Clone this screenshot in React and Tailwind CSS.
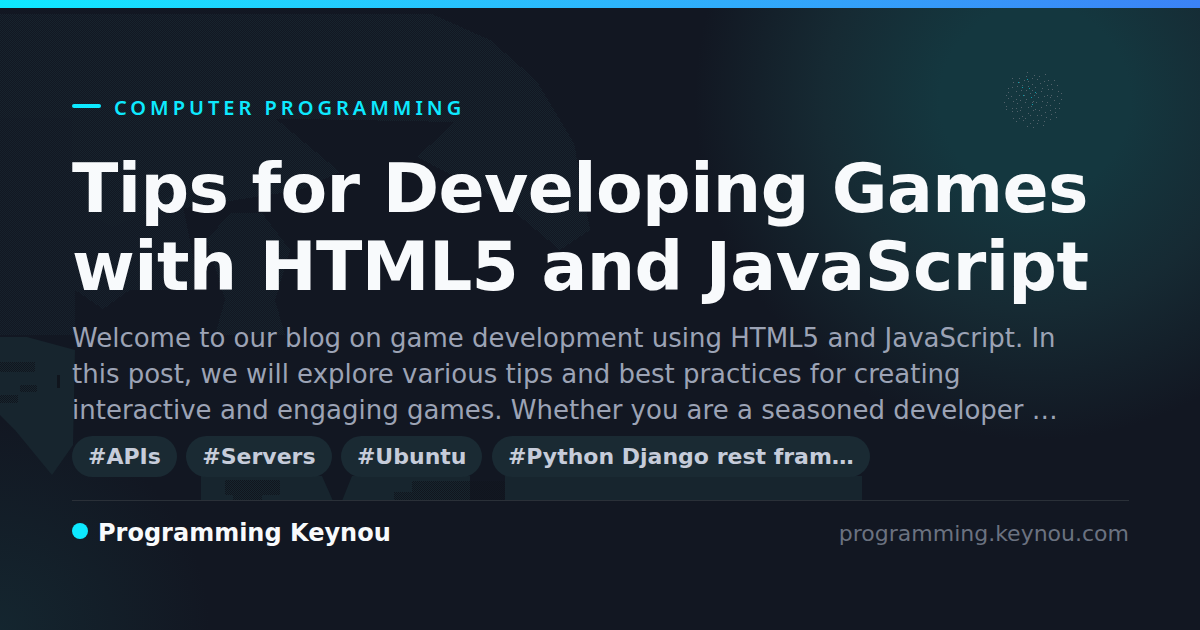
import React from "react";

const tags = ["#APIs", "#Servers", "#Ubuntu", "#Python Django rest fram…"];

const tealDots = [
  [1018, 82], [1022, 87], [1027, 79], [1029, 88],
  [1035, 92], [1031, 97], [1023, 95], [1032, 104],
];

// dotted cluster in the glow, top right
const dots = Array.from({ length: 110 }, (_, i) => {
  const r = 2.9 * Math.sqrt(i);
  const a = i * 2.399963;
  return {
    x: Math.round(1033 + r * Math.cos(a) + Math.sin(i * 7.3)),
    y: Math.round(99.5 + r * Math.sin(a) * 0.92 + Math.cos(i * 5.1)),
  };
});

function Backdrop() {
  return (
    <svg className="absolute inset-0" width="1200" height="630" viewBox="0 0 1200 630">
      <defs>
        <pattern id="dither" width="2" height="2" patternUnits="userSpaceOnUse">
          <rect width="1" height="1" fill="#1a2b35" />
          <rect x="1" y="1" width="1" height="1" fill="#1a2b35" />
        </pattern>
        <pattern id="darkDither" width="2" height="2" patternUnits="userSpaceOnUse">
          <rect width="1" height="1" fill="#10151d" />
          <rect x="1" y="1" width="1" height="1" fill="#10151d" />
        </pattern>
      </defs>

      {/* faint dithered silhouette behind the heading */}
      <g fill="url(#dither)" shapeRendering="crispEdges">
        <path d="M0 14H432L490 40L536 80L574 143L590 230L560 250L500 200L417 157L455 122L250 118L275 118L340 172L300 190L140 215L113 227L90 215L72 160V118H0Z" opacity="0.6" />
        <path d="M0 118H72V160L90 215L113 227L140 215L180 190L200 290L130 290L103 309L75 290V335H0Z" opacity="0.5" />
        <path d="M230 213H262L290 250L275 300L285 335H215L225 300L207 240Z" opacity="0.55" />
      </g>

      {/* solid bits: left blob, and what shows under the tags */}
      <g fill="#17252e">
        <path d="M0 337H27L75 350L73 445L52 475L15 430L0 415Z" />
        <path d="M201 476H322L333 501H201Z" />
        <path d="M352 476H470V501H342Z" />
        <path d="M505 476H862V501H505Z" />
      </g>
      <g fill="url(#darkDither)">
        <rect x="0" y="362" width="35" height="10" />
        <rect x="20" y="385" width="17" height="7" />
        <rect x="0" y="395" width="18" height="8" />
        <rect x="225" y="480" width="55" height="15" />
        <rect x="233" y="495" width="29" height="5" />
        <path d="M412 481H470V501H394V492H412Z" />
        <rect x="470" y="481" width="35" height="20" />
      </g>
      <rect x="57" y="375" width="3" height="13" fill="#10151d" />

      {dots.map((d, i) => (
        <rect key={i} x={d.x} y={d.y} width="1" height="1" fill="#52626b" />
      ))}
      {tealDots.map(([x, y]) => (
        <rect key={`${x}-${y}`} x={x} y={y} width="1" height="1" fill="#0e9aa8" />
      ))}
    </svg>
  );
}

export default function App() {
  return (
    <div className="relative w-[1200px] h-[630px] overflow-hidden bg-[#121722] font-['DejaVu_Sans',sans-serif]">
      <div className="absolute inset-0 bg-[radial-gradient(circle_340px_at_1035px_100px,#14373f_0%,#14373f_28%,#162a33_62%,rgba(18,23,34,0)_100%)]" />
      <div className="absolute inset-0 bg-[radial-gradient(circle_210px_at_0px_630px,rgba(22,50,58,0.55)_0%,rgba(18,23,34,0)_100%)]" />
      <Backdrop />
      <div className="absolute top-0 left-0 right-0 h-2 bg-gradient-to-r from-[#0de9ff] to-[#3b82f6]" />

      <div className="relative flex flex-col pt-[96px] pl-[72px] pr-[71px]">
        <div className="flex items-center gap-[13px] h-6">
          <div className="w-[29px] h-[4px] rounded-full bg-[#0de9ff] -mt-1" />
          <span className="font-['Noto_Sans',sans-serif] text-[20px] font-semibold tracking-[4px] text-[#0de9ff] whitespace-nowrap">
            COMPUTER PROGRAMMING
          </span>
        </div>

        <h1 className="mt-[30px] text-[68px] leading-[78.2px] tracking-[-0.6px] font-bold text-[#f8fafc] whitespace-nowrap">
          Tips for Developing Games
          <br />
          with HTML5 and JavaScript
        </h1>

        <p className="mt-[14px] text-[26px] leading-[36px] text-[#9ca3b5] whitespace-nowrap">
          Welcome to our blog on game development using HTML5 and JavaScript. In
          <br />
          this post, we will explore various tips and best practices for creating
          <br />
          interactive and engaging games. Whether you are a seasoned developer …
        </p>

        <div className="mt-[8px] flex gap-[9.4px]">
          {tags.map((t) => (
            <span
              key={t}
              className="h-[41px] px-[16px] flex items-center rounded-full bg-[#1a2a33] text-[22px] font-bold text-[#c6ccda] whitespace-nowrap"
            >
              {t}
            </span>
          ))}
        </div>

        <div className="mt-[23px] h-px bg-[#2a3038]" />

        <div className="mt-[14px] flex items-center justify-between">
          <div className="flex items-center gap-[10px]">
            <div className="w-4 h-4 rounded-full bg-[#0de9ff] -mt-1" />
            <span className="text-[24px] font-bold text-[#f8fafc]">Programming Keynou</span>
          </div>
          <span className="text-[22px] text-[#6b7280]">programming.keynou.com</span>
        </div>
      </div>
    </div>
  );
}
